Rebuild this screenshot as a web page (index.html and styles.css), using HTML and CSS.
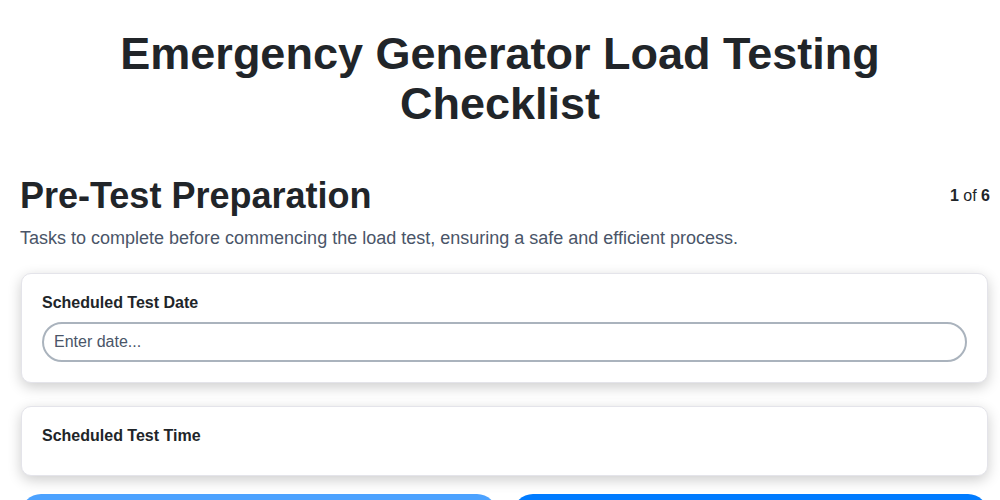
FILE: index.html
```html
<!DOCTYPE html>
<html lang="en">
<head>
<meta charset="utf-8">
<title>Emergency Generator Load Testing Checklist</title>
<link rel="stylesheet" href="styles.css">
</head>
<body>
<header class="header">
  <h1 class="title">Emergency Generator Load Testing Checklist</h1>
</header>
<div class="page">
  <div class="section-head">
    <h2 class="section-title">Pre-Test Preparation</h2>
    <div class="progress"><b>1</b> of <b>6</b></div>
  </div>
  <p class="section-desc">Tasks to complete before commencing the load test, ensuring a safe and efficient process.</p>
  <div class="card">
    <label class="field-label" for="date">Scheduled Test Date</label>
    <input class="field-input" id="date" type="text" placeholder="Enter date...">
  </div>
  <div class="card">
    <label class="field-label">Scheduled Test Time</label>
  </div>
  <div class="nav">
    <button class="btn btn-prev" disabled>Previous</button>
    <button class="btn btn-next">Next</button>
  </div>
</div>
</body>
</html>
```
FILE: styles.css
```css
html, body {
  margin: 0;
  padding: 0;
  background: #ffffff;
}
body {
  font-family: "Liberation Sans", Arial, sans-serif;
  color: #212529;
}
.header {
  padding: 29px 0 0;
}
.title {
  max-width: 800px;
  margin: 0 auto 46px;
  text-align: center;
  font-size: 45px;
  line-height: 50px;
  font-weight: 700;
  color: #212529;
}
.page {
  padding: 0 12px 0 21px;
}
.section-head {
  display: flex;
  align-items: center;
  justify-content: space-between;
  margin-left: -1px;
  margin-right: -2px;
}
.section-title {
  margin: 0;
  font-size: 36px;
  font-weight: 700;
  color: #212529;
}
.progress {
  font-size: 16px;
  color: #212529;
}
.section-desc {
  margin: 11px 0 24px -1px;
  font-size: 18px;
  color: #4a5568;
}
.card {
  background: #ffffff;
  border: 1px solid #e4e4ea;
  border-radius: 10px;
  box-shadow: 0 4px 14px rgba(0, 0, 0, 0.2);
  padding: 20px;
  margin-bottom: 23px;
}
.field-label {
  display: block;
  font-size: 16px;
  font-weight: 700;
  margin-bottom: 10px;
  color: #212529;
}
.field-input {
  display: block;
  box-sizing: border-box;
  width: 100%;
  height: 40px;
  border: 2px solid #aab3bd;
  border-radius: 20px;
  padding: 0 10px;
  font-family: "Liberation Sans", Arial, sans-serif;
  font-size: 16px;
  color: #212529;
  background: #ffffff;
  outline: none;
}
.field-input::placeholder {
  color: #4a5568;
  opacity: 1;
}
.nav {
  display: flex;
  gap: 16px;
  margin-top: -5px;
}
.btn {
  flex: 1;
  height: 44px;
  border: none;
  border-radius: 20px;
  background: #007bff;
  color: #ffffff;
  font-family: "Liberation Sans", Arial, sans-serif;
  font-size: 16px;
  font-weight: 700;
}
.btn-prev {
  opacity: 0.7;
}
```
